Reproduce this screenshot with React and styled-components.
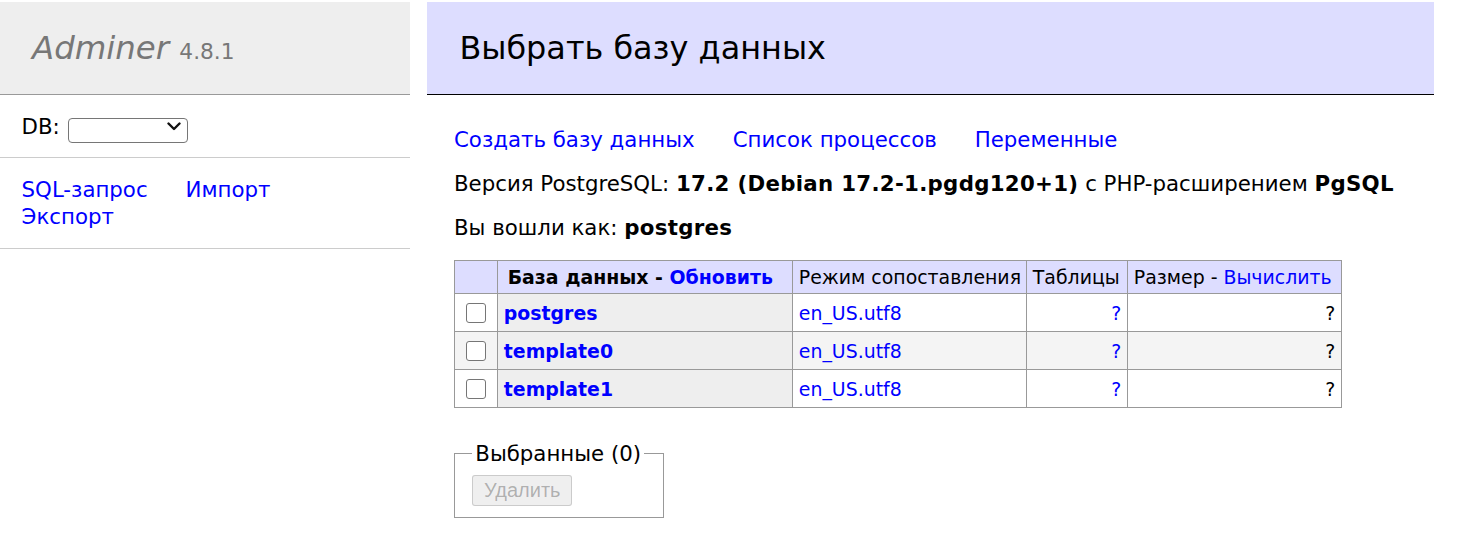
import React from 'react';
import styled, { createGlobalStyle } from 'styled-components';

const GlobalStyle = createGlobalStyle`
  html, body {
    margin: 0;
    padding: 0;
    background: #fff;
    color: #000;
  }
  body {
    font-family: 'DejaVu Sans', Verdana, sans-serif;
    font-size: 21.3px;
    line-height: 27px;
  }
`;

const databases = [
  { name: 'postgres', collation: 'en_US.utf8' },
  { name: 'template0', collation: 'en_US.utf8' },
  { name: 'template1', collation: 'en_US.utf8' },
];

const App = () => {
  return (
    <Page>
      <GlobalStyle />
      <Menu>
        <Logo>
          Adminer <Version>4.8.1</Version>
        </Logo>
        <MenuSection>
          <label>DB: </label>
          <SelectWrap>
            <Select defaultValue="">
              <option value=""></option>
            </Select>
            <Chevron width="14" height="9" viewBox="0 0 14 9">
              <path d="M1.5 1.5 L7 7 L12.5 1.5" fill="none" stroke="#111" strokeWidth="2.4" strokeLinecap="round" strokeLinejoin="round" />
            </Chevron>
          </SelectWrap>
        </MenuSection>
        <MenuLinks>
          <Link href="#">SQL-запрос</Link>
          <Link href="#">Импорт</Link>
          <Link href="#">Экспорт</Link>
        </MenuLinks>
      </Menu>
      <Content>
        <Title>Выбрать базу данных</Title>
        <Body>
          <LinkRow>
            <Link href="#">Создать базу данных</Link>
            <Link href="#">Список процессов</Link>
            <Link href="#">Переменные</Link>
          </LinkRow>
          <Info>
            Версия PostgreSQL: <b>17.2 (Debian 17.2-1.pgdg120+1)</b> с PHP-расширением <b>PgSQL</b>
          </Info>
          <Info>
            Вы вошли как: <b>postgres</b>
          </Info>
          <Grid>
            <colgroup>
              <col style={{ width: 43 }} />
              <col style={{ width: 295 }} />
              <col style={{ width: 234 }} />
              <col style={{ width: 101 }} />
              <col style={{ width: 214 }} />
            </colgroup>
            <thead>
              <HeadRow>
                <HeadCell />
                <HeadCell as="th" $bold>
                  База данных - <Link href="#">Обновить</Link>
                </HeadCell>
                <HeadCell>Режим сопоставления</HeadCell>
                <HeadCell>Таблицы</HeadCell>
                <HeadCell>
                  Размер - <Link href="#">Вычислить</Link>
                </HeadCell>
              </HeadRow>
            </thead>
            <tbody>
              {databases.map((db) => (
                <BodyRow key={db.name}>
                  <Cell $center>
                    <Check type="checkbox" />
                  </Cell>
                  <NameCell>
                    <Link href="#">{db.name}</Link>
                  </NameCell>
                  <Cell>
                    <Link href="#">{db.collation}</Link>
                  </Cell>
                  <Cell $right>
                    <Link href="#">?</Link>
                  </Cell>
                  <Cell $right>?</Cell>
                </BodyRow>
              ))}
            </tbody>
          </Grid>
          <Fieldset>
            <Legend>Выбранные (0)</Legend>
            <Button disabled>Удалить</Button>
          </Fieldset>
        </Body>
      </Content>
    </Page>
  );
};

const Page = styled.div`
  display: flex;
  align-items: flex-start;
  padding-top: 2px;
`;

const Menu = styled.nav`
  width: 410px;
  flex-shrink: 0;
`;

const Logo = styled.h1`
  margin: 0;
  padding: 26px 32px;
  height: 40px;
  font-size: 32.4px;
  line-height: 40px;
  font-weight: normal;
  font-style: italic;
  color: #777;
  background: #eee;
  border-bottom: 1px solid #999;
`;

const Version = styled.span`
  font-style: normal;
  font-size: 21.7px;
  line-height: 1;
`;

const MenuSection = styled.div`
  display: flex;
  align-items: center;
  gap: 8px;
  padding: 17.5px 21.6px 17.5px;
  height: 27px;
  border-bottom: 1px solid #ccc;
`;

const MenuLinks = styled.div`
  display: flex;
  flex-wrap: wrap;
  column-gap: 38px;
  padding: 18.3px 100px 17.8px 21.6px;
  border-bottom: 1px solid #ccc;
`;

const SelectWrap = styled.span`
  position: relative;
  display: inline-block;
  width: 120px;
  height: 25px;
`;

const Select = styled.select`
  appearance: none;
  box-sizing: border-box;
  width: 120px;
  height: 25px;
  margin: 0;
  border: 1px solid #767676;
  border-radius: 4px;
  background: #fff;
`;

const Chevron = styled.svg`
  position: absolute;
  right: 7px;
  top: 8px;
  pointer-events: none;
`;

const Link = styled.a`
  color: #00f;
  text-decoration: none;
  white-space: nowrap;
`;

const Content = styled.main`
  width: 1007px;
  margin-left: 17px;
`;

const Title = styled.h2`
  margin: 0 0 31px;
  padding: 26px 32.4px;
  height: 40px;
  font-size: 31.9px;
  line-height: 40px;
  font-weight: normal;
  color: #000;
  background: #ddf;
  border-bottom: 1px solid #000;
`;

const Body = styled.div`
  padding-left: 27px;
`;

const LinkRow = styled.div`
  display: flex;
  gap: 38px;
  line-height: 27px;
`;

const Info = styled.p`
  margin: 17px 0 0;
  line-height: 27px;
  white-space: nowrap;
  & b {
    font-weight: bold;
    letter-spacing: 0.3px;
  }
`;

const Grid = styled.table`
  table-layout: fixed;
  width: 887px;
  margin-top: 19.4px;
  border-collapse: collapse;
  font-size: 18.9px;
  line-height: 24.3px;
`;

const HeadRow = styled.tr`
  height: 33px;
  background: #ddf;
`;

const HeadCell = styled.td`
  border: 1px solid #999;
  padding: 3.9px ${(p) => (p.$bold ? '9.7px' : '5.8px')};
  font-weight: ${(p) => (p.$bold ? 'bold' : 'normal')};
  text-align: left;
  white-space: nowrap;
  overflow: hidden;
`;

const BodyRow = styled.tr`
  height: 38px;
  &:nth-child(2n) {
    background: #f4f4f4;
  }
`;

const Cell = styled.td`
  border: 1px solid #999;
  padding: 3.9px 5.8px;
  text-align: ${(p) => (p.$right ? 'right' : p.$center ? 'center' : 'left')};
  white-space: nowrap;
`;

const NameCell = styled.th`
  border: 1px solid #999;
  padding: 3.9px 5.8px;
  background: #eee;
  text-align: left;
  font-weight: bold;
`;

const Check = styled.input`
  appearance: none;
  box-sizing: border-box;
  display: block;
  width: 19.5px;
  height: 19.5px;
  margin: 0 auto;
  border: 1.5px solid #767676;
  border-radius: 3px;
  background: #fff;
`;

const Fieldset = styled.fieldset`
  display: inline-block;
  margin: 32px 0 0;
  padding: 7.5px 19px 11.5px 17.3px;
  border: 1px solid #999;
`;

const Legend = styled.legend`
  padding: 0 3px;
  line-height: 27px;
`;

const Button = styled.button`
  display: block;
  box-sizing: border-box;
  width: 100px;
  height: 31px;
  padding: 0;
  font-family: 'Liberation Sans', Arial, sans-serif;
  font-size: 20px;
  color: rgba(16, 16, 16, 0.3);
  background: #efefef;
  border: 1px solid rgba(118, 118, 118, 0.3);
  border-radius: 3px;
`;

export default App;
